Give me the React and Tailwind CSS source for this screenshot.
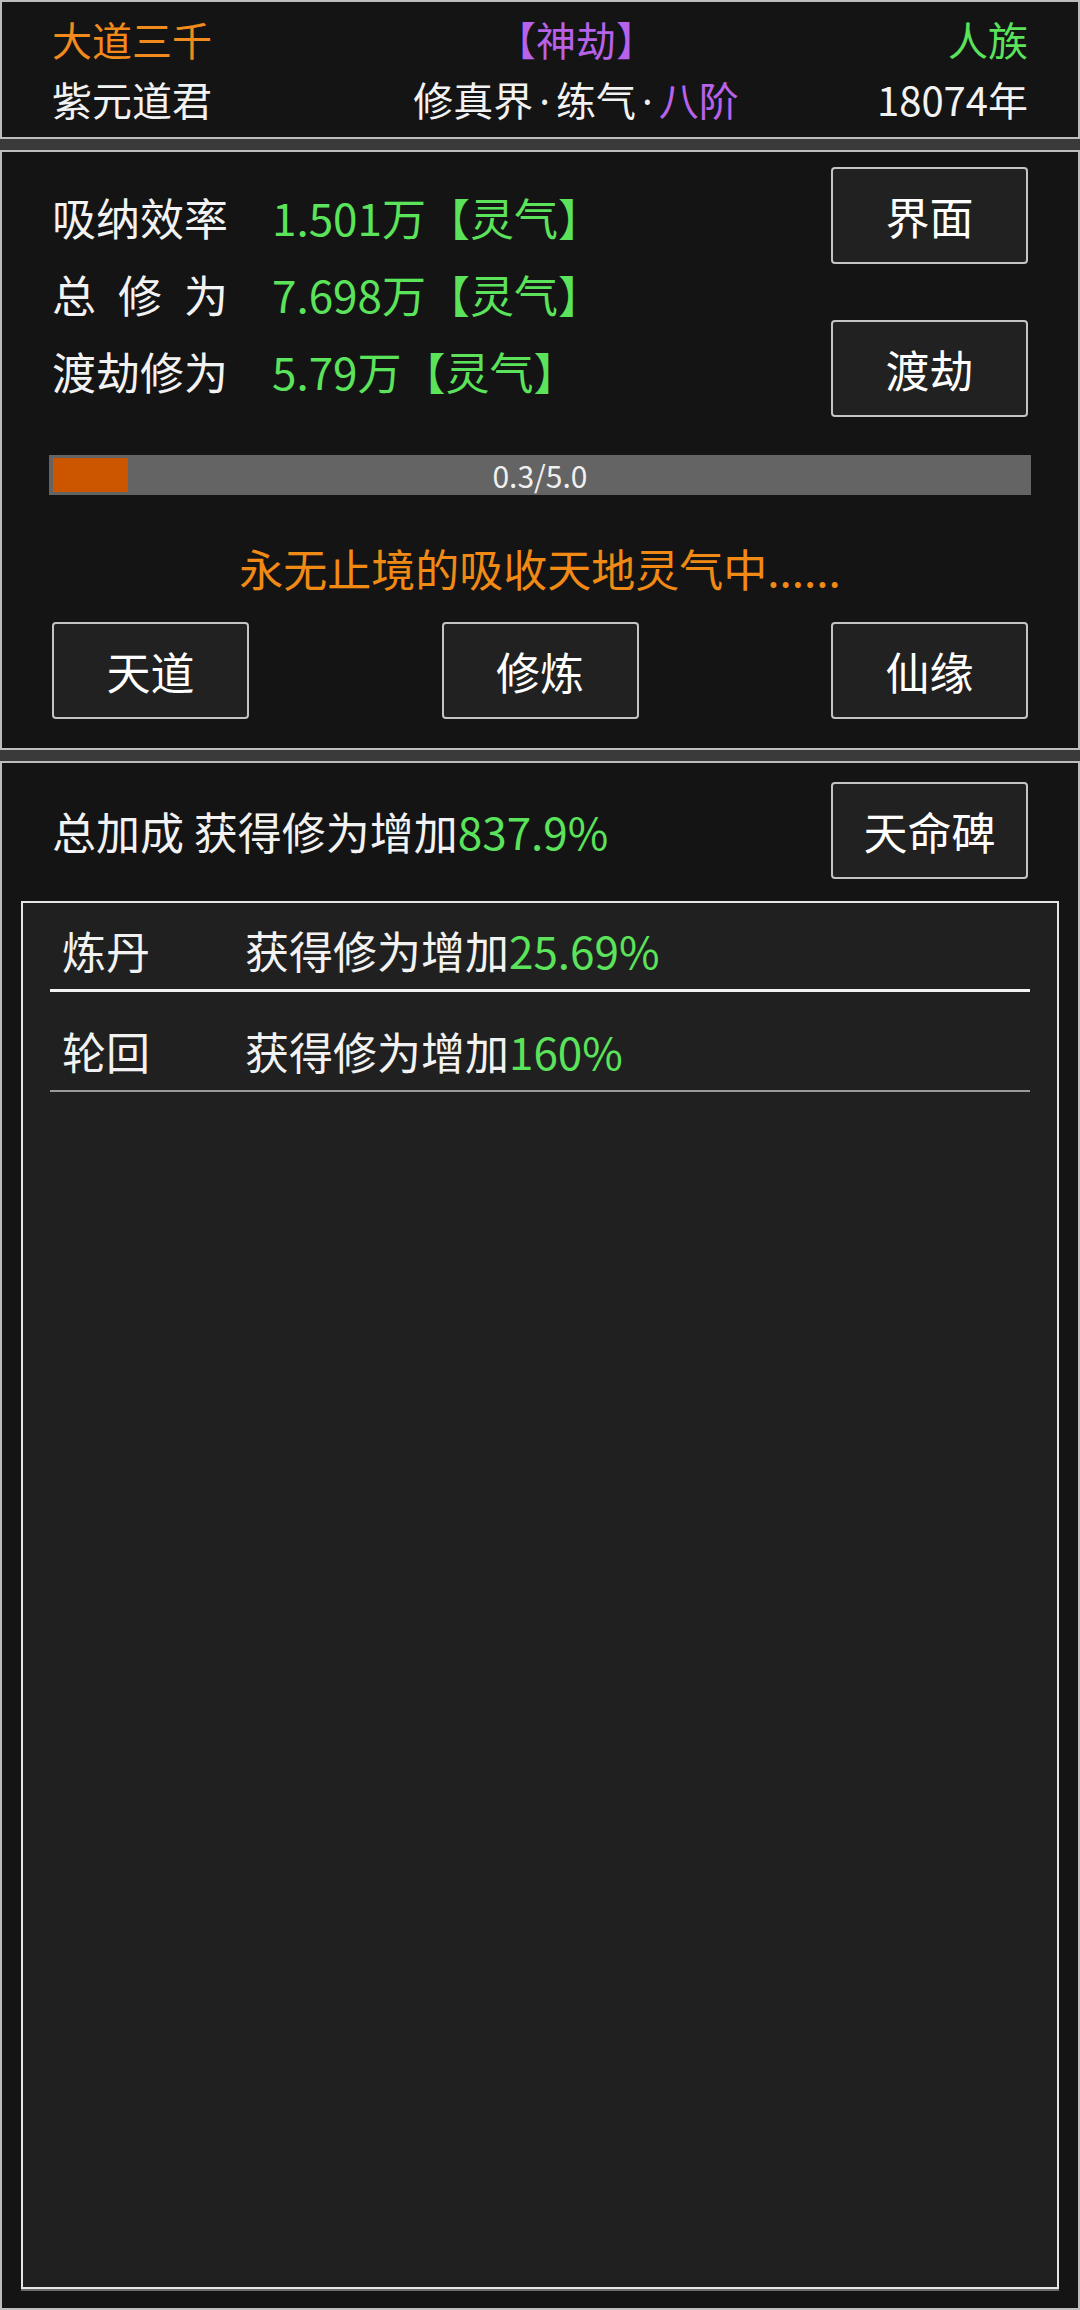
const GREEN = 'text-[#5be35b]';

const STATS = [
  { label: ['吸', '纳', '效', '率'], value: '1.501万【灵气】' },
  { label: ['总', '修', '为'], value: '7.698万【灵气】' },
  { label: ['渡', '劫', '修', '为'], value: '5.79万【灵气】' },
];

const BONUSES = [
  { name: '炼丹', pct: '25.69%' },
  { name: '轮回', pct: '160%' },
];

function Btn({ children }) {
  return (
    <button className="w-[197px] h-[97px] border-2 border-[#c4c4c4] rounded-[4px] bg-[#212121] text-white text-[44px] leading-none flex items-center justify-center">
      {children}
    </button>
  );
}

// narrow middle dot, the CJK one is full width
const Dot = () => <span className="font-['Noto_Sans',sans-serif] px-[6px]">·</span>;

export default function App() {
  return (
    <div className="w-[1080px] min-h-[2310px] bg-[#3a3a3a] flex flex-col gap-[11px] font-['Noto_Sans_CJK_SC',sans-serif] text-[#f2f2f2]">
      {/* header */}
      <div className="h-[139px] border-2 border-[#bdbdbd] bg-[#141414] px-[50px] pt-[7px] grid grid-cols-[1fr_auto_1fr] text-[40px] leading-[60px]">
        <div className="flex flex-col items-start">
          <span className="text-[#f28a1c]">大道三千</span>
          <span>紫元道君</span>
        </div>
        <div className="flex flex-col items-center pl-[72px]">
          <span className="text-[#b862ea]">【神劫】</span>
          <span>
            修真界<Dot />练气<Dot /><span className="text-[#b862ea]">八阶</span>
          </span>
        </div>
        <div className="flex flex-col items-end">
          <span className={GREEN}>人族</span>
          <span>18074年</span>
        </div>
      </div>

      {/* cultivation panel */}
      <div className="h-[600px] border-2 border-[#bdbdbd] bg-[#141414] px-[50px] pt-[15px] flex flex-col">
        <div className="flex justify-between items-start">
          <div className="mt-[11px] flex flex-col">
            {STATS.map((s) => (
              <div key={s.value} className="h-[77px] flex items-center text-[44px] leading-none">
                <div className="w-[176px] flex justify-between">
                  {s.label.map((c, i) => (
                    <span key={i}>{c}</span>
                  ))}
                </div>
                <span className={`ml-[44px] ${GREEN}`}>{s.value}</span>
              </div>
            ))}
          </div>
          <div className="flex flex-col gap-[56px]">
            <Btn>界面</Btn>
            <Btn>渡劫</Btn>
          </div>
        </div>

        <div className="mt-[38px] mx-[-3px] h-[40px] bg-[#646464] relative flex items-center justify-center">
          <div className="absolute left-[4px] top-[3px] bottom-[3px] w-[75px] bg-[#cc5500]" />
          <span className="relative text-[30px] leading-none text-[#f0f0f0]">0.3/5.0</span>
        </div>

        <div className="mt-[43px] text-center text-[44px] leading-[60px] text-[#f08a14]">
          永无止境的吸收天地灵气中......
        </div>

        <div className="mt-[24px] flex justify-between">
          <Btn>天道</Btn>
          <Btn>修炼</Btn>
          <Btn>仙缘</Btn>
        </div>
      </div>

      {/* bonus panel */}
      <div className="flex-1 border-2 border-[#bdbdbd] bg-[#141414] flex flex-col">
        <div className="px-[50px] pt-[19px] flex justify-between items-center">
          <span className="text-[44px] leading-none">
            总加成 获得修为增加<span className={GREEN}>837.9%</span>
          </span>
          <Btn>天命碑</Btn>
        </div>

        <div className="flex-1 mt-[22px] mx-[19px] mb-[19px] border-2 border-[#e6e6e6] bg-[#202020] shadow-[0_2px_0_#6a6a6a] px-[27px]">
          {BONUSES.map((b, i) => (
            <div key={b.name}>
              <div className={`flex text-[44px] leading-[44px] pl-[12px] pb-[17px] ${i === 0 ? 'pt-[25px]' : 'pt-[37px]'}`}>
                <span className="w-[183px]">{b.name}</span>
                <span>
                  获得修为增加<span className={GREEN}>{b.pct}</span>
                </span>
              </div>
              <div className={i === 0 ? 'h-[3px] bg-[#f2f2f2]' : 'h-[2px] bg-[#9a9a9a]'} />
            </div>
          ))}
        </div>
      </div>
    </div>
  );
}
